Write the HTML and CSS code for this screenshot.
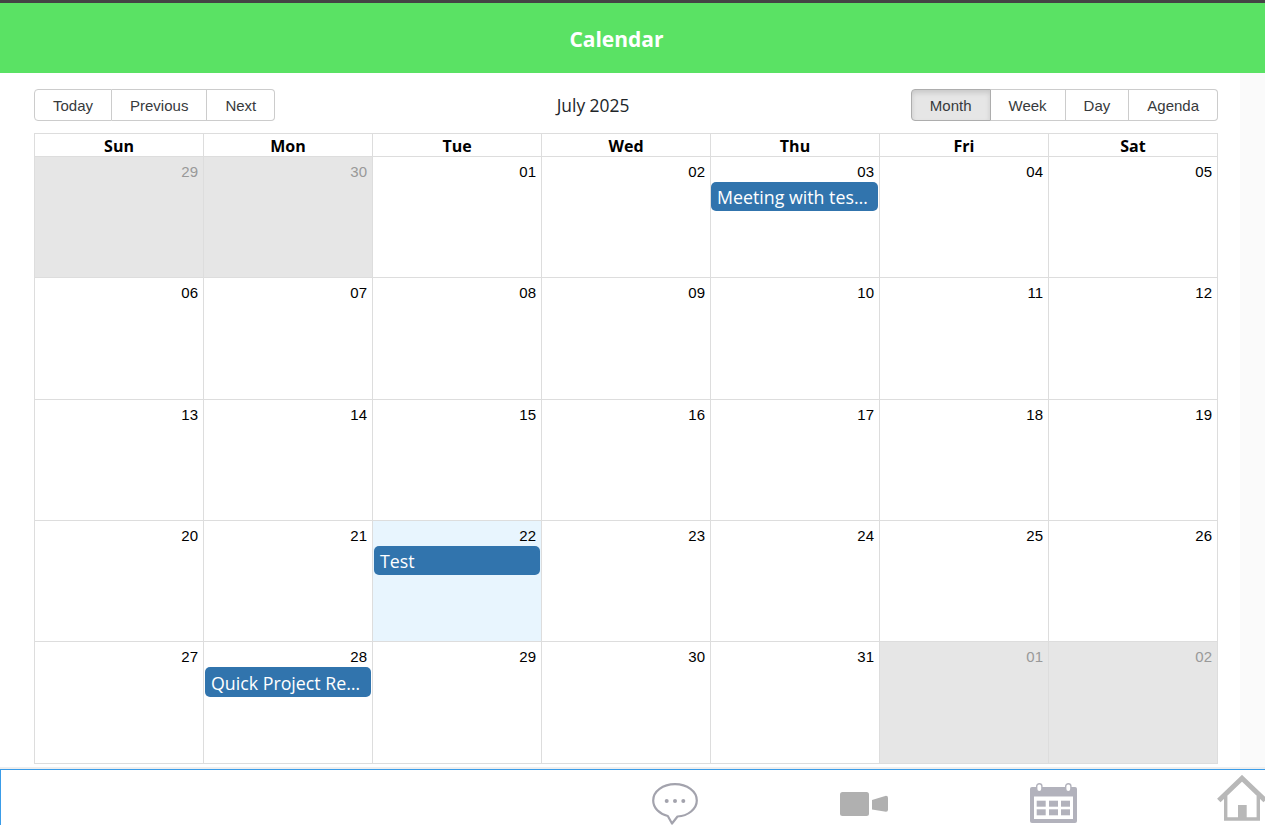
FILE: index.html
```html
<!DOCTYPE html>
<html lang="en">
<head>
<meta charset="utf-8">
<title>Calendar</title>
<link rel="stylesheet" href="styles.css">
</head>
<body>
<div class="app">
  <header class="page-header"><h1 class="page-title">Calendar</h1></header>
  <div class="body-row">
    <main class="content">
      <div class="toolbar">
        <div class="btn-group">
          <button class="btn">Today</button><button class="btn">Previous</button><button class="btn">Next</button>
        </div>
        <div class="toolbar-label">July 2025</div>
        <div class="btn-group">
          <button class="btn active">Month</button><button class="btn">Week</button><button class="btn">Day</button><button class="btn">Agenda</button>
        </div>
      </div>
      <div class="month">
        <div class="week">
          <div class="head-cell">Sun</div><div class="head-cell">Mon</div><div class="head-cell">Tue</div><div class="head-cell">Wed</div><div class="head-cell">Thu</div><div class="head-cell">Fri</div><div class="head-cell">Sat</div>
        </div>
        <div class="week">
          <div class="day off"><div class="date">29</div></div>
          <div class="day off"><div class="date">30</div></div>
          <div class="day"><div class="date">01</div></div>
          <div class="day"><div class="date">02</div></div>
          <div class="day"><div class="date">03</div><div class="event flush">Meeting with tes…</div></div>
          <div class="day"><div class="date">04</div></div>
          <div class="day"><div class="date">05</div></div>
        </div>
        <div class="week">
          <div class="day"><div class="date">06</div></div>
          <div class="day"><div class="date">07</div></div>
          <div class="day"><div class="date">08</div></div>
          <div class="day"><div class="date">09</div></div>
          <div class="day"><div class="date">10</div></div>
          <div class="day"><div class="date">11</div></div>
          <div class="day"><div class="date">12</div></div>
        </div>
        <div class="week">
          <div class="day"><div class="date">13</div></div>
          <div class="day"><div class="date">14</div></div>
          <div class="day"><div class="date">15</div></div>
          <div class="day"><div class="date">16</div></div>
          <div class="day"><div class="date">17</div></div>
          <div class="day"><div class="date">18</div></div>
          <div class="day"><div class="date">19</div></div>
        </div>
        <div class="week">
          <div class="day"><div class="date">20</div></div>
          <div class="day"><div class="date">21</div></div>
          <div class="day today"><div class="date">22</div><div class="event">Test</div></div>
          <div class="day"><div class="date">23</div></div>
          <div class="day"><div class="date">24</div></div>
          <div class="day"><div class="date">25</div></div>
          <div class="day"><div class="date">26</div></div>
        </div>
        <div class="week">
          <div class="day"><div class="date">27</div></div>
          <div class="day"><div class="date">28</div><div class="event tall">Quick Project Re…</div></div>
          <div class="day"><div class="date">29</div></div>
          <div class="day"><div class="date">30</div></div>
          <div class="day"><div class="date">31</div></div>
          <div class="day off"><div class="date">01</div></div>
          <div class="day off"><div class="date">02</div></div>
        </div>
      </div>
    </main>
    <div class="side-strip"></div>
  </div>
  <footer class="dock">
    <svg class="icon icon-chat" viewBox="0 0 46 44" aria-hidden="true">
      <path d="M23 1.200C10.800 1.200 1.200 8.400 1.200 17.500c0 7.500 6.200 13.500 14.600 15.500l4.200 7.500 5.500-7C36 33 44.800 26 44.800 17.500 44.800 8.400 35.200 1.200 23 1.200z" fill="#fff" stroke="#a3a3ad" stroke-width="2.200" stroke-linejoin="round"/>
      <circle cx="14.700" cy="18" r="2" fill="#a3a3ad"/><circle cx="23" cy="18" r="2" fill="#a3a3ad"/><circle cx="31.300" cy="18" r="2" fill="#a3a3ad"/>
    </svg>
    <svg class="icon icon-video" viewBox="0 0 48 24" aria-hidden="true">
      <rect x="0" y="0" width="29" height="24" rx="2.500" fill="#b0b0b0"/>
      <path d="M32 8 46 3.700Q48 3.700 48 5.700V17.700Q48 19.700 46 19.700L32 17.500z" fill="#b0b0b0"/>
    </svg>
    <svg class="icon icon-cal" viewBox="0 0 47 42" aria-hidden="true">
      <path d="M2 4h43a2 2 0 0 1 2 2v32a2 2 0 0 1-2 2H2a2 2 0 0 1-2-2V6a2 2 0 0 1 2-2z" fill="#b2b2bc"/>
      <rect x="4" y="13.500" width="39" height="22.500" fill="#fff"/>
      <rect x="6.700" y="0.700" width="5.200" height="8" rx="2.600" fill="#fff" stroke="#b2b2bc" stroke-width="1.400"/>
      <rect x="35.700" y="0.700" width="5.200" height="8" rx="2.600" fill="#fff" stroke="#b2b2bc" stroke-width="1.400"/>
      <rect x="6.700" y="17.700" width="9" height="6" fill="#b2b2bc"/><rect x="19" y="17.700" width="9" height="6" fill="#b2b2bc"/><rect x="31" y="17.700" width="9" height="6" fill="#b2b2bc"/>
      <rect x="6.700" y="26.300" width="9" height="6" fill="#b2b2bc"/><rect x="19" y="26.300" width="9" height="6" fill="#b2b2bc"/><rect x="31" y="26.300" width="9" height="6" fill="#b2b2bc"/>
    </svg>
    <svg class="icon icon-home" viewBox="0 0 50 46" aria-hidden="true">
      <path d="M1.800 25.500 25 3.300l23.200 22.200" fill="none" stroke="#b8b8b8" stroke-width="5"/>
      <path d="M8.700 21v23h32.600V21" fill="none" stroke="#b8b8b8" stroke-width="3.400"/>
      <rect x="21" y="30" width="8.700" height="15" fill="#b8b8b8"/>
    </svg>
  </footer>
</div>
</body>
</html>
```

FILE: styles.css
```css
* { box-sizing: border-box; }

html, body {
  margin: 0;
  padding: 0;
  height: 100%;
  overflow: hidden;
  background: #fff;
  font-family: "Liberation Sans", Arial, sans-serif;
}

.app {
  display: flex;
  flex-direction: column;
  width: 1265px;
  height: 825px;
  overflow: hidden;
  background: #eee;
}

.page-header {
  flex: none;
  height: 73px;
  border-top: 3px solid #444;
  background: #5ae264;
  display: flex;
  align-items: center;
  justify-content: center;
  padding: 3px 32px 0 0;
}

.page-title {
  margin: 0;
  color: #fff;
  font: 700 21px/1 "Open Sans", sans-serif;
}

.body-row {
  flex: none;
  display: flex;
  height: 694px;
}

.content {
  flex: none;
  width: 1240px;
  background: #fff;
  padding: 16px 22px 0 34px;
  display: flex;
  flex-direction: column;
}

.side-strip {
  flex: 1;
  background: #fafafa;
}

.toolbar {
  flex: none;
  display: flex;
  align-items: center;
  height: 32px;
  margin-bottom: 12px;
}

.toolbar-label {
  flex: 1;
  padding-top: 1px;
  text-align: center;
  font: 400 17.4px/1 "Open Sans", sans-serif;
  color: #212529;
}

.btn-group {
  display: flex;
  height: 32px;
}

.btn {
  margin: 0;
  height: 32px;
  padding: 0 18px;
  border: 1px solid #ccc;
  border-left-width: 0;
  background: #fff;
  color: #373a3c;
  font: 400 15px/1 "Liberation Sans", Arial, sans-serif;
}

.btn:first-child {
  border-left-width: 1px;
  border-radius: 4px 0 0 4px;
}

.btn:last-child {
  border-radius: 0 4px 4px 0;
}

.btn.active {
  background: #e6e6e6;
  border-color: #adadad;
  box-shadow: inset 0 3px 5px rgba(0, 0, 0, .125);
}

.month {
  flex: none;
  height: 631px;
  display: grid;
  grid-template-rows: 23px 121px 122px 121px 121px 122px;
  border-top: 1px solid #ddd;
  border-left: 1px solid #ddd;
}

.week {
  display: grid;
  grid-template-columns: repeat(7, 169px);
  min-height: 0;
}

.head-cell {
  text-align: center;
  font: 700 16px/24px "Open Sans", sans-serif;
  color: #000;
  border-right: 1px solid #ddd;
  border-bottom: 1px solid #ddd;
  overflow: hidden;
}

.day {
  min-width: 0;
  border-right: 1px solid #ddd;
  border-bottom: 1px solid #ddd;
  padding: 7px 1px 0 1px;
}

.day.off { background: #e6e6e6; }
.day.off .date { color: #999; }
.day.today { background: #e8f5fe; }

.date {
  height: 18px;
  margin-right: -1px;
  padding-right: 5px;
  text-align: right;
  color: #000;
  font-size: 15px;
  line-height: 16px;
}

.event {
  height: 29px;
  padding: 0 5px 0 6px;
  border-radius: 5px;
  background: #3174ad;
  color: #fff;
  font: 400 17.8px/30px "Open Sans", sans-serif;
  white-space: nowrap;
  overflow: hidden;
}

.event.flush { margin-left: -1px; }

.event.tall {
  height: 30px;
  line-height: 32px;
}

.dock {
  flex: none;
  height: 56px;
  margin-top: 2px;
  background: #fff;
  border-top: 1px solid #3a9ce8;
  border-left: 1px solid #3a9ce8;
  display: flex;
  justify-content: flex-end;
  align-items: flex-start;
  overflow: hidden;
}

.icon { flex: none; display: block; }

.icon-chat { width: 46px; height: 44px; margin-top: 13px; }
.icon-video { width: 48px; height: 24px; margin-top: 22px; margin-left: 142px; }
.icon-cal { width: 47px; height: 42px; margin-top: 13px; margin-left: 142px; }
.icon-home { width: 50px; height: 46px; margin-top: 5px; margin-left: 140px; margin-right: -2px; }
```
